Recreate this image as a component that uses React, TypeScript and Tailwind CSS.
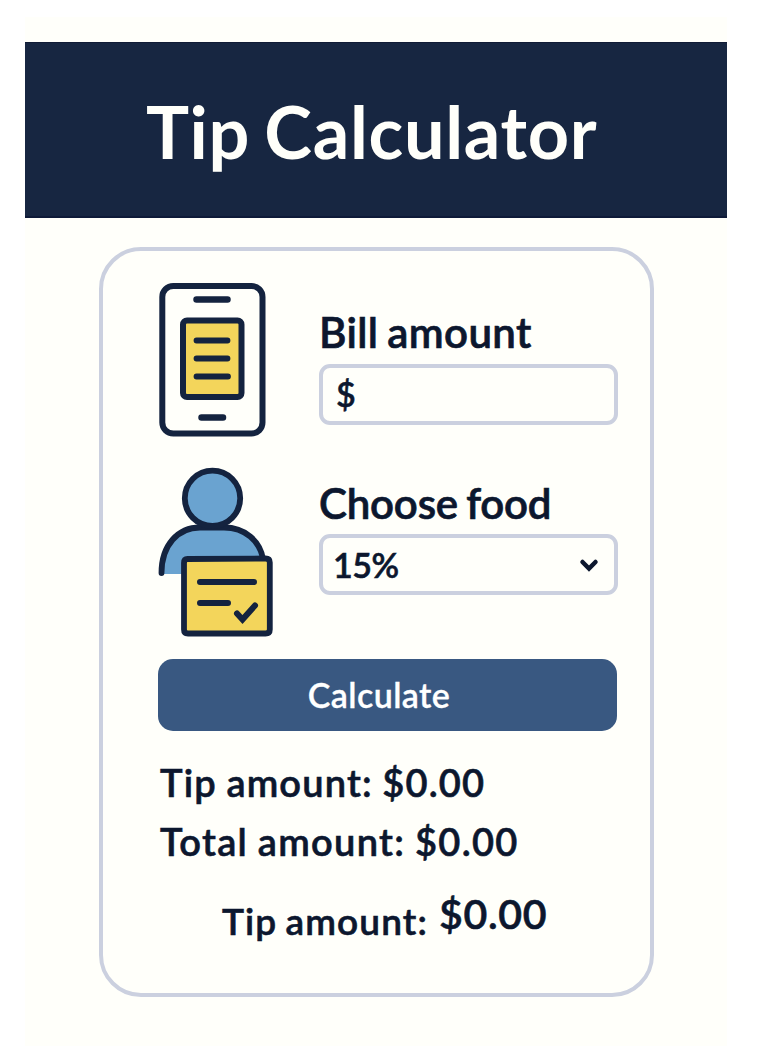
function PhoneIcon() {
  return (
    <svg width="108" height="154" viewBox="0 0 108 154" fill="none" stroke="#14233f" strokeWidth="6" strokeLinecap="round">
      <rect x="4.300" y="3" width="100.200" height="147.500" rx="11" />
      <rect x="25" y="37.500" width="58.500" height="76.500" rx="4" fill="#f3d55b" />
      <path d="M38.500 16.500H69.500M43.500 134.500H65" strokeWidth="6.500" />
      <path d="M38.500 57.500H69.500M38.500 75.500H69.500M38.500 93.500H70" strokeWidth="5.800" />
    </svg>
  );
}

function PersonIcon() {
  return (
    <svg width="116" height="170" viewBox="0 0 116 170" fill="none" stroke="#14233f" strokeWidth="5.800" strokeLinecap="round" strokeLinejoin="round">
      <path d="M4 107C4 79 20 60 42 60H66C88 60 102 74 106 92V107Z" fill="#6aa3d0" stroke="none" />
      <path d="M3.500 106C3.500 78 20 60.500 42 60.500H66C87 60.500 102 74 105 92" />
      <circle cx="54.500" cy="31.300" r="27.700" fill="#6aa3d0" />
      <path d="M29.500 92L107.500 91.500Q111.800 91.500 111.800 95.500V162.500Q111.800 166.500 107.500 166.500H30Q26 166.500 26 162.500V96Q26 92 29.500 92Z" fill="#f3d55b" />
      <path d="M42 115H96M42 136H70M79 146.500L84.500 152.500L97 138.500" strokeWidth="6" strokeLinejoin="miter" />
    </svg>
  );
}

export default function App() {
  return (
    <div className="h-[1046px] w-[761px] overflow-hidden bg-white pt-[17px] pl-[25px] font-['Lato',sans-serif] font-semibold text-[#0c172e]">
      <main className="h-[1029px] w-[702px] bg-[#fffffa] pt-[25px]">
        <header className="h-[176px] border-t border-b-2 border-t-[#101b35] border-b-[#0e1a38] bg-[#172641] pt-[52px] pl-[121px]">
          <h1 className="text-[72px] leading-[72px] font-bold tracking-[0.7px] whitespace-nowrap text-[#fffffa] [word-spacing:-4px]">Tip Calculator</h1>
        </header>
        <section className="mt-[29px] ml-[74px] h-[750px] w-[555px] rounded-[42px] border-[4px] border-[#cbd0df] pt-8 pl-[55px]">
          <div className="flex h-[154px]">
            <div className="w-[161px]"><PhoneIcon /></div>
            <div className="w-[299px] pt-[28px]">
              <label htmlFor="bill" className="block text-[42px] leading-[42px] tracking-[0.4px] whitespace-nowrap [-webkit-text-stroke:0.7px] [word-spacing:-2px]">Bill amount</label>
              <div id="bill" className="mt-[11px] h-[61px] rounded-[11px] border-[4px] border-[#cbd0df] pt-[6px] pl-[13px] text-[34px] leading-[40px] [-webkit-text-stroke:0.5px]">$</div>
            </div>
          </div>
          <div className="mt-[30px] flex h-[170px]">
            <div className="w-[161px]"><PersonIcon /></div>
            <div className="w-[299px] pt-[15px]">
              <label htmlFor="food" className="block text-[42px] leading-[42px] tracking-[-0.2px] whitespace-nowrap [-webkit-text-stroke:0.7px] [word-spacing:-2px]">Choose food</label>
              <div id="food" className="mt-[10px] flex h-[61px] items-start justify-between rounded-[11px] border-[4px] border-[#cbd0df] pt-[7px] pr-[14px] pl-[10px] text-[34px] leading-[40px]">
                <span className="tracking-[-0.5px] [-webkit-text-stroke:0.6px]">15%</span>
                <svg className="mt-[12px]" width="22" height="16" viewBox="0 0 22 16" fill="none" stroke="#0c172e" strokeWidth="4.500" strokeLinecap="round">
                  <path d="M4.500 5L11 11.500L17.500 5" />
                </svg>
              </div>
            </div>
          </div>
          <button className="mt-[22px] block h-[72px] w-[459px] rounded-[15px] bg-[#395881] pr-[17px] pb-[1px] text-center text-[34px] leading-[40px] tracking-[0.4px] text-white [-webkit-text-stroke:0.3px]">Calculate</button>
          <div className="mt-8 pl-[2px] whitespace-nowrap [-webkit-text-stroke:0.6px]">
            <p className="text-[38px] leading-[38px] tracking-[1.15px] [word-spacing:-1px]">Tip amount: $0.00</p>
            <p className="mt-[21px] text-[38px] leading-[38px] tracking-[1.3px] [word-spacing:-1px]">Total amount: $0.00</p>
            <p className="mt-[34px] flex pl-[62px] leading-[38px]">
              <span className="w-[217px] pt-2 text-[37px] tracking-[1.1px] [word-spacing:-2px]">Tip amount:</span>
              <span className="pt-[1px] text-[41px] tracking-[0.7px]">$0.00</span>
            </p>
          </div>
        </section>
      </main>
    </div>
  );
}
